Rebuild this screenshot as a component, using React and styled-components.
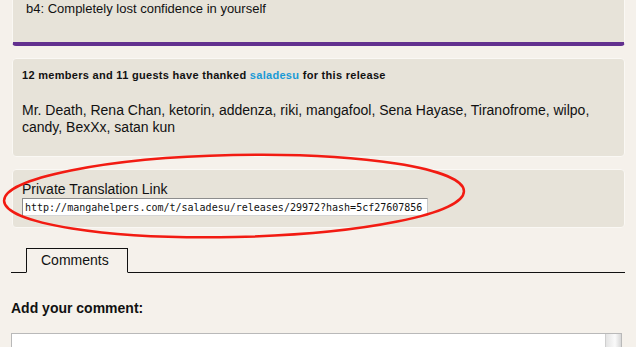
import React from 'react';
import styled, { createGlobalStyle } from 'styled-components';

const GlobalStyle = createGlobalStyle`
  html, body {
    margin: 0;
    padding: 0;
    background: #f5f1eb;
    font-family: "Liberation Sans", Arial, sans-serif;
    color: #111;
  }
`;

const Page = styled.div`
  position: relative;
  width: 636px;
  height: 347px;
  overflow: hidden;
  padding: 0 11px 0 11px;
  box-sizing: border-box;
`;

const Panel = styled.div`
  background: #e7e3d9;
  border: 1px solid #faf8f4;
  border-radius: 4px;
  padding: ${p => p.$pad || '10px'};
  margin: 0 0 0 1px;
  box-sizing: border-box;
  height: ${p => p.$h || 'auto'};
  ${p => p.$accent && `
    border-top: none;
    border-radius: 0 0 4px 4px;
    border-bottom: 4px solid #62308f;
  `}
`;

const Gap = styled.div`
  height: ${p => p.$h}px;
`;

const Body = styled.p`
  margin: 0;
  font-size: ${p => p.$size || 14}px;
  line-height: ${p => p.$lh || 16}px;
`;

const ThanksHead = styled.p`
  margin: 0 0 20px;
  font-size: 11px;
  font-weight: bold;
  letter-spacing: 0.3px;
  line-height: 14px;
`;

const UserLink = styled.a`
  color: #1a9ad6;
  text-decoration: none;
`;

const Label = styled.label`
  display: block;
  font-size: 14px;
  line-height: 16px;
  margin-bottom: 1px;
`;

const LinkInput = styled.input`
  display: block;
  width: 406px;
  height: 18px;
  box-sizing: border-box;
  border: 1px solid #8d8d8d;
  border-right-color: #c8c8c8;
  border-bottom-color: #d6d6d6;
  background: #fff;
  padding: 0 2px;
  font-family: "DejaVu Sans Mono", "Liberation Mono", monospace;
  font-size: 10px;
  color: #111;
  outline: none;
`;

const Tabs = styled.div`
  display: flex;
  border-bottom: 1px solid #111;
  padding-left: 15px;
  height: 24px;
`;

const Tab = styled.div`
  width: 102px;
  height: 25px;
  box-sizing: border-box;
  border: 1px solid #111;
  border-bottom: 1px solid #f5f1eb;
  background: #f5f1eb;
  font-size: 14px;
  line-height: 22px;
  padding-left: 14px;
`;

const Heading = styled.h3`
  margin: 0;
  font-size: 14px;
  font-weight: bold;
  line-height: 16px;
`;

const CommentBox = styled.div`
  position: relative;
  width: 611px;
  height: 40px;
  box-sizing: border-box;
  background: #fff;
  border: 1px solid #b9b9b9;
`;

const Scroll = styled.div`
  position: absolute;
  right: 0;
  top: 0;
  width: 15px;
  height: 100%;
  background: linear-gradient(to right, #e4e4e4, #fafafa 60%, #d8d8d8);
  border-left: 1px solid #cfcfcf;
`;

const Highlight = styled.svg`
  position: absolute;
  left: 0;
  top: 0;
  pointer-events: none;
`;

export default function App() {
  return (
    <>
      <GlobalStyle />
      <Page>
        <Panel $accent $pad="2px 13px 0" $h="47px" style={{ marginTop: '-1px' }}>
          <Body $size={13}>b4: Completely lost confidence in yourself</Body>
        </Panel>
        <Gap $h={12} />
        <Panel $pad="9px 9px" $h="99px">
          <ThanksHead>
            12 members and 11 guests have thanked <UserLink href="#">saladesu</UserLink> for this release
          </ThanksHead>
          <Body $lh={17}>
            Mr. Death, Rena Chan, ketorin, addenza, riki, mangafool, Sena Hayase, Tiranofrome, wilpo, candy, BexXx, satan kun
          </Body>
        </Panel>
        <Gap $h={12} />
        <Panel $pad="11px 9px 0" $h="59px">
          <Label>Private Translation Link</Label>
          <LinkInput readOnly value="http://mangahelpers.com/t/saladesu/releases/29972?hash=5cf27607856" />
        </Panel>
        <Gap $h={20} />
        <Tabs>
          <Tab>Comments</Tab>
        </Tabs>
        <Gap $h={27} />
        <Heading>Add your comment:</Heading>
        <Gap $h={17} />
        <CommentBox>
          <Scroll />
        </CommentBox>
        <Highlight width="636" height="347">
          <ellipse cx="234" cy="196" rx="230" ry="41" fill="none" stroke="#f21b12" strokeWidth="2.5" transform="rotate(-1.2 234 196)" />
        </Highlight>
      </Page>
    </>
  );
}
